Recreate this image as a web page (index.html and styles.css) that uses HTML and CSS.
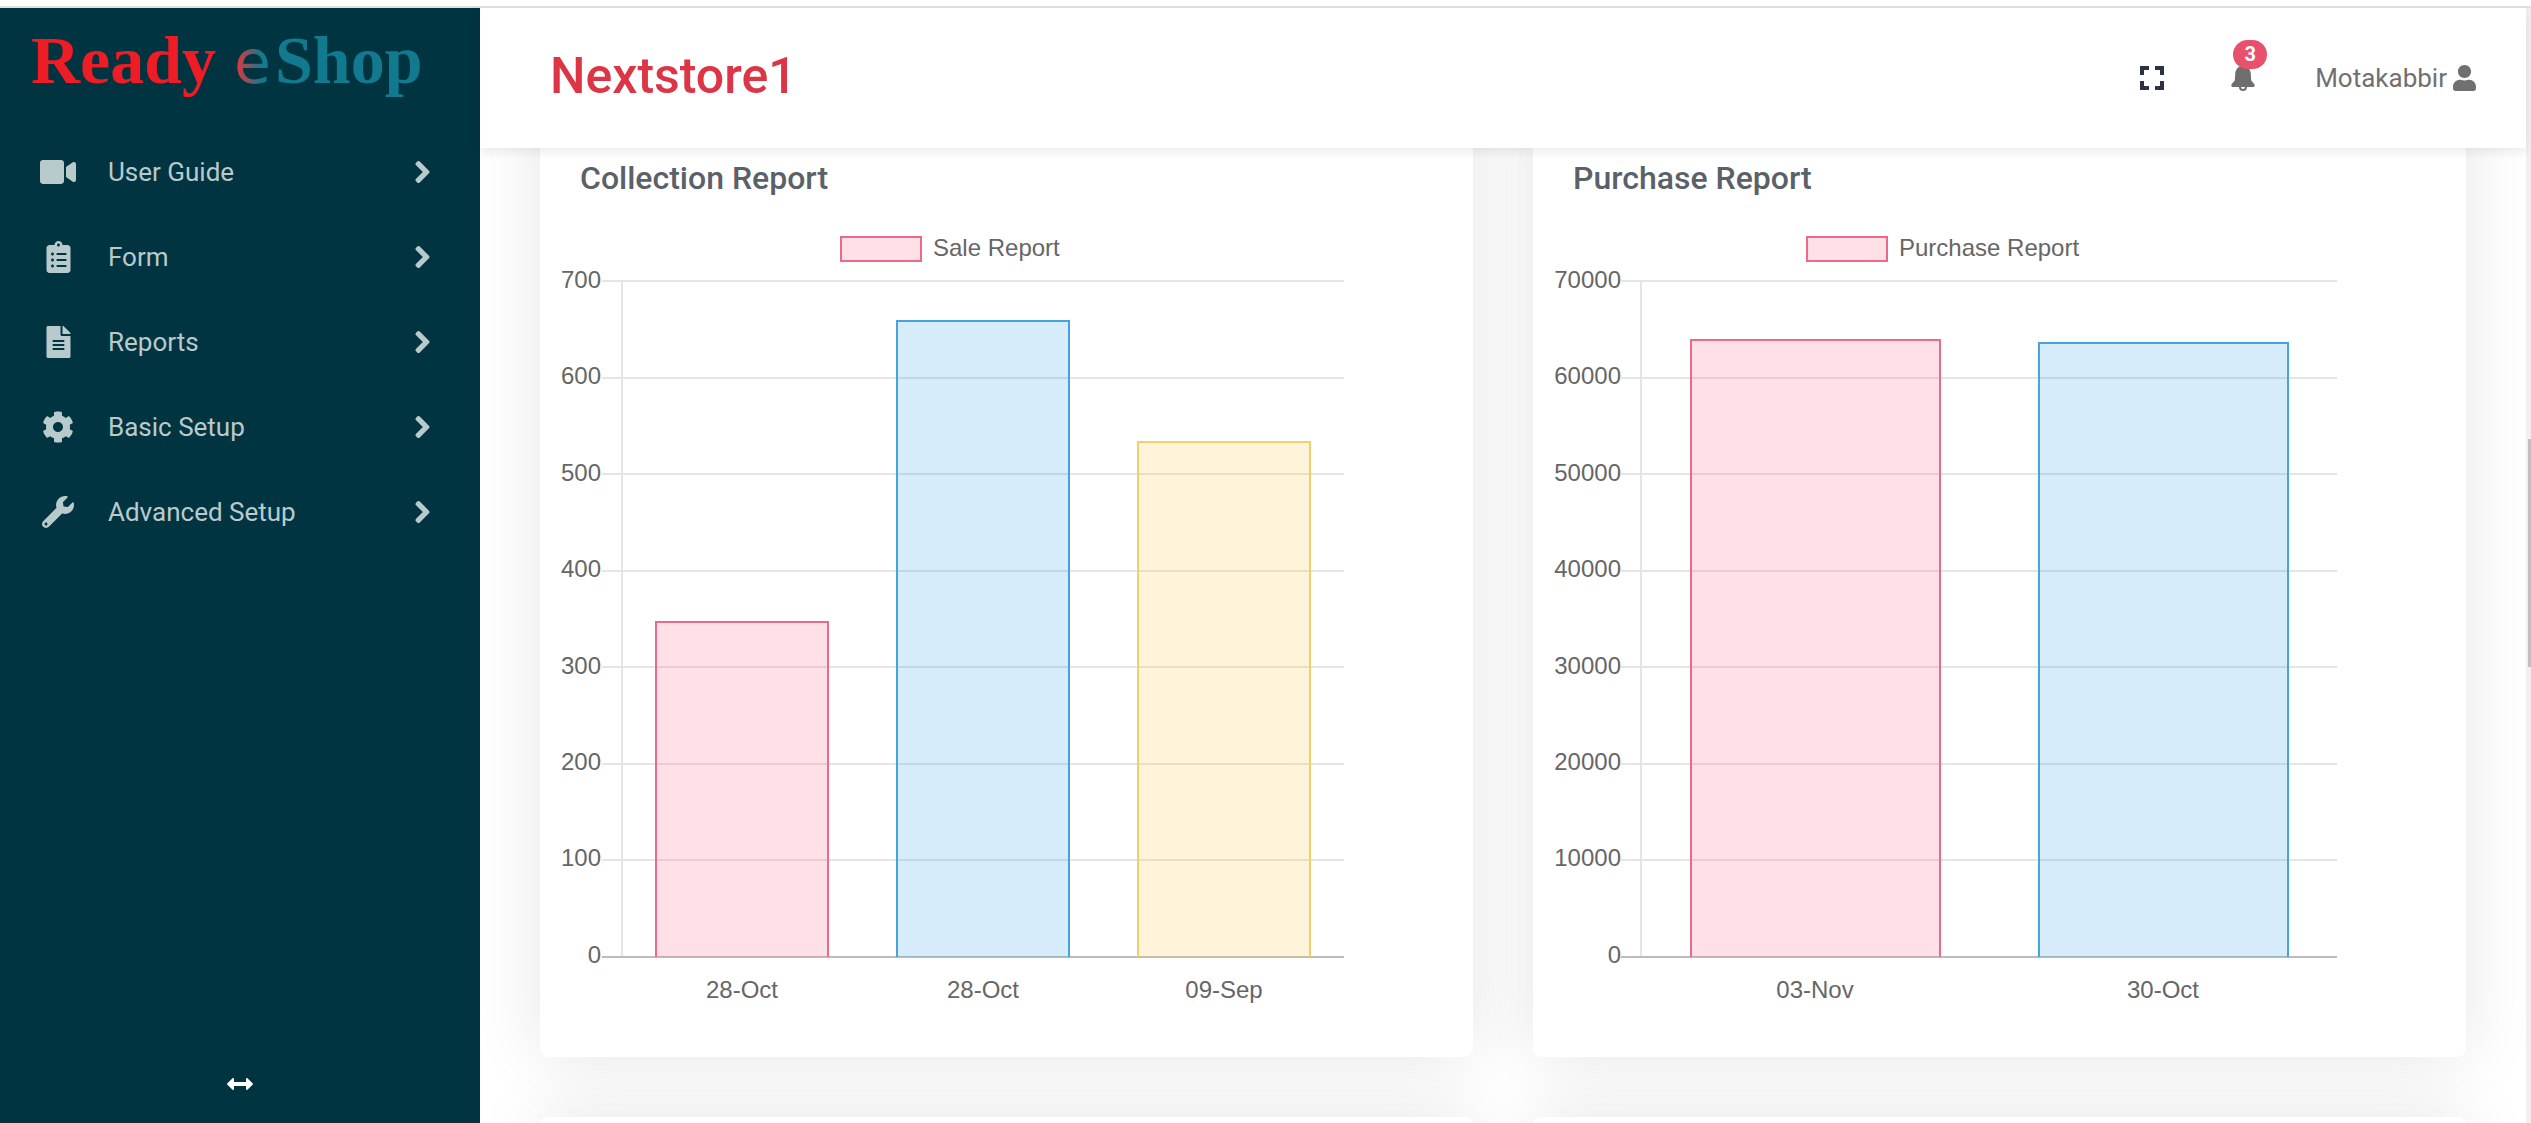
FILE: index.html
```html
<!DOCTYPE html>
<html lang="en">
<head>
<meta charset="utf-8">
<meta name="viewport" content="width=device-width, initial-scale=1">
<title>Nextstore1 - Ready eShop</title>
<link rel="stylesheet" href="styles.css">
</head>
<body>
<svg class="sprite" aria-hidden="true">
  <symbol id="chevron" viewBox="0 0 320 512"><path d="M285.476 272.971L91.132 467.314c-9.373 9.373-24.569 9.373-33.941 0l-22.667-22.667c-9.357-9.357-9.375-24.522-.04-33.901L188.505 256 34.484 101.255c-9.335-9.379-9.317-24.544.04-33.901l22.667-22.667c9.373-9.373 24.569-9.373 33.941 0L285.475 239.03c9.373 9.372 9.373 24.568.001 33.941z"/></symbol>
</svg>
<div class="app">
  <aside class="sidebar">
    <a class="logo" href="#"><span class="logo-ready">Ready</span><span class="logo-e">e</span><span class="logo-shop">Shop</span></a>
    <nav class="menu">
      <a class="menu-item" href="#">
        <span class="menu-icon"><svg width="38" height="32" viewBox="0 0 576 512"><path d="M336.200 64H47.800C21.400 64 0 85.400 0 111.800v288.400C0 426.600 21.400 448 47.800 448h288.400c26.400 0 47.800-21.400 47.800-47.800V111.800c0-26.400-21.400-47.800-47.800-47.800zm189.400 37.700L416 177.300v157.400l109.600 75.500c21.200 14.600 50.400-.3 50.400-25.800V127.500c0-25.400-29.100-40.400-50.400-25.800z"/></svg></span>
        <span class="menu-label">User Guide</span>
        <svg class="chevron" width="15" height="24"><use href="#chevron"/></svg>
      </a>
      <a class="menu-item" href="#">
        <span class="menu-icon"><svg width="25" height="32" viewBox="0 0 384 512"><path d="M336 64h-80c0-35.300-28.700-64-64-64s-64 28.700-64 64H48C21.500 64 0 85.500 0 112v352c0 26.500 21.500 48 48 48h288c26.500 0 48-21.500 48-48V112c0-26.500-21.500-48-48-48zM96 424c-13.300 0-24-10.700-24-24s10.700-24 24-24 24 10.700 24 24-10.700 24-24 24zm0-96c-13.300 0-24-10.700-24-24s10.700-24 24-24 24 10.700 24 24-10.700 24-24 24zm0-96c-13.300 0-24-10.700-24-24s10.700-24 24-24 24 10.700 24 24-10.700 24-24 24zm96-192c13.300 0 24 10.700 24 24s-10.700 24-24 24-24-10.700-24-24 10.700-24 24-24zm128 368c0 4.400-3.600 8-8 8H168c-4.400 0-8-3.600-8-8v-16c0-4.400 3.600-8 8-8h144c4.400 0 8 3.600 8 8v16zm0-96c0 4.400-3.600 8-8 8H168c-4.400 0-8-3.600-8-8v-16c0-4.400 3.600-8 8-8h144c4.400 0 8 3.600 8 8v16zm0-96c0 4.400-3.600 8-8 8H168c-4.400 0-8-3.600-8-8v-16c0-4.400 3.600-8 8-8h144c4.400 0 8 3.600 8 8v16z"/></svg></span>
        <span class="menu-label">Form</span>
        <svg class="chevron" width="15" height="24"><use href="#chevron"/></svg>
      </a>
      <a class="menu-item" href="#">
        <span class="menu-icon"><svg width="25" height="32" viewBox="0 0 384 512"><path d="M224 136V0H24C10.700 0 0 10.700 0 24v464c0 13.300 10.700 24 24 24h336c13.300 0 24-10.700 24-24V160H248c-13.200 0-24-10.800-24-24zm64 236c0 6.600-5.400 12-12 12H108c-6.600 0-12-5.400-12-12v-8c0-6.600 5.400-12 12-12h168c6.600 0 12 5.400 12 12v8zm0-64c0 6.600-5.400 12-12 12H108c-6.600 0-12-5.400-12-12v-8c0-6.600 5.400-12 12-12h168c6.600 0 12 5.400 12 12v8zm0-72v8c0 6.600-5.400 12-12 12H108c-6.600 0-12-5.400-12-12v-8c0-6.600 5.400-12 12-12h168c6.600 0 12 5.400 12 12zm96-114.100v6.100H256V0h6.100c6.400 0 12.500 2.500 17 7l97.900 98c4.500 4.500 7 10.600 7 16.900z"/></svg></span>
        <span class="menu-label">Reports</span>
        <svg class="chevron" width="15" height="24"><use href="#chevron"/></svg>
      </a>
      <a class="menu-item" href="#">
        <span class="menu-icon"><svg width="32" height="32" viewBox="0 0 512 512"><path d="M487.400 315.700l-42.600-24.600c4.300-23.200 4.300-47 0-70.200l42.600-24.600c4.900-2.800 7.100-8.600 5.500-14-11.100-35.600-30-67.800-54.700-94.600-3.800-4.100-10-5.100-14.800-2.300L380.800 110c-17.900-15.400-38.500-27.300-60.800-35.100V25.800c0-5.600-3.900-10.500-9.400-11.700-36.700-8.200-74.300-7.800-109.200 0-5.500 1.200-9.400 6.100-9.400 11.700V75c-22.200 7.900-42.800 19.800-60.800 35.100L88.700 85.500c-4.900-2.800-11-1.900-14.800 2.300-24.700 26.700-43.600 58.900-54.700 94.600-1.700 5.400.6 11.200 5.500 14L67.300 221c-4.300 23.200-4.300 47 0 70.200l-42.600 24.600c-4.900 2.800-7.100 8.600-5.500 14 11.100 35.600 30 67.800 54.700 94.600 3.800 4.100 10 5.100 14.800 2.300l42.600-24.600c17.900 15.400 38.500 27.300 60.800 35.100v49.200c0 5.600 3.900 10.500 9.400 11.700 36.700 8.200 74.300 7.800 109.200 0 5.500-1.200 9.400-6.100 9.400-11.700v-49.200c22.200-7.900 42.800-19.800 60.800-35.100l42.600 24.600c4.900 2.800 11 1.900 14.800-2.300 24.700-26.700 43.600-58.900 54.700-94.600 1.500-5.500-.7-11.300-5.600-14.100zM256 336c-44.100 0-80-35.900-80-80s35.900-80 80-80 80 35.900 80 80-35.900 80-80 80z"/></svg></span>
        <span class="menu-label">Basic Setup</span>
        <svg class="chevron" width="15" height="24"><use href="#chevron"/></svg>
      </a>
      <a class="menu-item" href="#">
        <span class="menu-icon"><svg width="32" height="32" viewBox="0 0 512 512"><path d="M507.730 109.100c-2.240-9.030-13.540-12.090-20.120-5.510l-74.360 74.360-67.880-11.310-11.310-67.880 74.360-74.360c6.620-6.620 3.430-17.900-5.660-20.160-47.380-11.740-99.550.91-136.580 37.930-39.640 39.640-50.550 97.100-34.050 147.200L18.740 402.760c-24.990 24.990-24.990 65.510 0 90.500 24.990 24.990 65.510 24.990 90.500 0l213.210-213.210c50.120 16.710 107.470 5.680 147.370-34.220 37.070-37.070 49.700-89.320 37.910-136.730zM64 472c-13.250 0-24-10.750-24-24 0-13.260 10.750-24 24-24s24 10.740 24 24c0 13.250-10.750 24-24 24z"/></svg></span>
        <span class="menu-label">Advanced Setup</span>
        <svg class="chevron" width="15" height="24"><use href="#chevron"/></svg>
      </a>
    </nav>
    <button class="collapse" type="button" aria-label="Resize menu"><svg width="26" height="12" viewBox="0 0 26 12"><path d="M7 1v3h12V1c0-1 1-1.300 1.700-.6l4.900 4.900c.4.400.4 1 0 1.400l-4.900 4.900c-.7.700-1.700.4-1.700-.6V8H7v3c0 1-1 1.300-1.700.6L.4 6.700c-.4-.4-.4-1 0-1.400L5.300.4C6-.3 7 0 7 1z"/></svg></button>
  </aside>

  <div class="page">
    <header class="topbar">
      <h1 class="store">Nextstore1</h1>
      <div class="tools">
        <button class="tool fullscreen" type="button" aria-label="Full screen"><svg width="24" height="24" viewBox="0 0 24 24"><path d="M0 0h9v4H4v5H0zM15 0h9v9h-4V4h-5zM0 15h4v5h5v4H0zM20 15h4v9h-9v-4h5z"/></svg></button>
        <button class="tool bell" type="button" aria-label="Notifications"><svg width="24" height="26" viewBox="0 0 24 26"><path d="M12 1C7 1 4.500 4.500 4.200 9L3.800 15.500 1.200 18.500C-.5 20.500.5 22 2 22H22c1.500 0 2.500-1.500.8-3.500L20.200 15.500 19.800 9C19.500 4.500 17 1 12 1z"/><path class="clapper" d="M9 22a3 3 0 0 0 6 0"/></svg><span class="badge">3</span></button>
        <a class="user" href="#">Motakabbir<svg width="23" height="26" viewBox="0 0 448 512" preserveAspectRatio="none"><path d="M224 256c70.700 0 128-57.300 128-128S294.700 0 224 0 96 57.300 96 128s57.300 128 128 128zm89.600 32h-16.700c-22.200 10.200-46.900 16-72.900 16s-50.600-5.800-72.900-16h-16.700C60.200 288 0 348.200 0 422.400V464c0 26.500 21.500 48 48 48h352c26.500 0 48-21.500 48-48v-41.600c0-74.200-60.200-134.400-134.400-134.400z"/></svg></a>
      </div>
    </header>

    <main class="content">
      <section class="card">
        <h2 class="card-title">Collection Report</h2>
        <svg class="chart" viewBox="0 0 788 790" role="img" aria-label="Sale Report">
          <rect class="pink" x="285" y="17" width="80" height="24"/>
          <text x="377" y="36">Sale Report</text>
          <path class="grid" d="M46 61H788M46 158H788M46 254H788M46 351H788M46 447H788M46 544H788M46 640H788M66 60V738"/>
          <path class="base" d="M46 737H788"/>
          <g class="ticks">
            <text x="45" y="68">700</text><text x="45" y="164">600</text><text x="45" y="261">500</text><text x="45" y="357">400</text>
            <text x="45" y="454">300</text><text x="45" y="550">200</text><text x="45" y="646">100</text><text x="45" y="743">0</text>
          </g>
          <path class="pink" d="M100 737V402H272V737"/>
          <path class="blue" d="M341 737V101H513V737"/>
          <path class="yellow" d="M582 737V222H754V737"/>
          <g class="dates"><text x="186" y="778">28-Oct</text><text x="427" y="778">28-Oct</text><text x="668" y="778">09-Sep</text></g>
        </svg>
      </section>
      <section class="card">
        <h2 class="card-title">Purchase Report</h2>
        <svg class="chart" viewBox="0 0 788 790" role="img" aria-label="Purchase Report">
          <rect class="pink" x="258" y="17" width="80" height="24"/>
          <text x="350" y="36">Purchase Report</text>
          <path class="grid" d="M72 61H788M72 158H788M72 254H788M72 351H788M72 447H788M72 544H788M72 640H788M92 60V738"/>
          <path class="base" d="M72 737H788"/>
          <g class="ticks">
            <text x="72" y="68">70000</text><text x="72" y="164">60000</text><text x="72" y="261">50000</text><text x="72" y="357">40000</text>
            <text x="72" y="454">30000</text><text x="72" y="550">20000</text><text x="72" y="646">10000</text><text x="72" y="743">0</text>
          </g>
          <path class="pink" d="M142 737V120H391V737"/>
          <path class="blue" d="M490 737V123H739V737"/>
          <g class="dates"><text x="266" y="778">03-Nov</text><text x="614" y="778">30-Oct</text></g>
        </svg>
      </section>
      <section class="card"></section>
      <section class="card"></section>
    </main>
  </div>
  <div class="scrollbar"><div class="thumb"></div></div>
</div>
</body>
</html>
```
FILE: styles.css
```css
* { box-sizing: border-box; }

body {
  margin: 0;
  background: #fff;
  font-family: Roboto, "Liberation Sans", sans-serif;
  font-size: 26px;
  line-height: 32px;
}

button {
  border: 0;
  padding: 0;
  background: none;
  font: inherit;
  cursor: pointer;
}

a { text-decoration: none; }
svg { display: block; fill: currentColor; }
.sprite { position: absolute; width: 0; height: 0; }

.app {
  display: flex;
  height: 100vh;
  padding-top: 6px;
  overflow: hidden;
}

/* Sidebar */
.sidebar {
  display: flex;
  flex-direction: column;
  flex: 0 0 480px;
  border-top: 2px solid #dcdfdf;
  background: #003441;
  color: #b9cacd;
}

.logo {
  display: flex;
  align-items: baseline;
  height: 121px;
  padding: 16px 0 0 31px;
  font: bold 68px/72px "Liberation Serif", serif;
}

.logo-ready { color: #ee1c25; }
.logo-shop { margin-left: 4px; color: #117a8e; }

.logo-e {
  margin-left: 18px;
  font: 60px/72px "DejaVu Sans", sans-serif;
  background: linear-gradient(90deg, #d8383f 10%, #117a8e 75%);
  background-clip: text;
  -webkit-background-clip: text;
  color: transparent;
}

.menu { flex: 1; }

.menu-item {
  display: flex;
  align-items: center;
  height: 85px;
  padding: 0 50px 0 36px;
  color: inherit;
}

.menu-icon {
  display: flex;
  justify-content: center;
  width: 44px;
}

.menu-label { flex: 1; margin-left: 28px; }
.chevron { stroke: currentColor; stroke-width: 32; }

.collapse {
  display: flex;
  justify-content: center;
  padding-bottom: 33px;
  color: #fff;
}

/* Main column */
.page {
  display: flex;
  flex-direction: column;
  flex: 1;
  min-width: 0;
  border-top: 2px solid #e0e0e0;
}

.topbar {
  position: relative;
  z-index: 1;
  display: flex;
  flex: none;
  align-items: center;
  justify-content: space-between;
  height: 140px;
  padding: 0 50px 0 70px;
  background: #fff;
  box-shadow: 0 4px 10px rgba(0, 0, 0, .08);
}

.store {
  margin: 0;
  padding-bottom: 4px;
  color: #dc3545;
  font-size: 50px;
  font-weight: 500;
  line-height: 60px;
}

.tools { display: flex; align-items: center; color: #707070; }
.tool { position: relative; }
.fullscreen { margin-right: 67px; color: #2b3244; }
.bell { margin-right: 60px; color: #6e6e6e; }
.clapper { fill: none; stroke: currentColor; stroke-width: 2; }

.badge {
  position: absolute;
  top: -25px;
  left: 2px;
  width: 34px;
  border-radius: 15px;
  background: #e9506b;
  color: #fff;
  font-size: 20px;
  font-weight: 700;
  line-height: 29px;
  text-align: center;
}

.user { display: flex; align-items: center; gap: 6px; color: inherit; }

/* The card grid is scrolled partly under the top bar */
.content {
  display: grid;
  flex: 1;
  grid-template-columns: 1fr 1fr;
  grid-template-rows: auto 400px;
  gap: 60px;
  min-height: 0;
  margin-top: -60px;
  padding: 0 60px;
  overflow: hidden;
}

.card {
  padding: 70px 16px 47px;
  border-radius: 8px;
  background: #fff;
  box-shadow: 0 0 70px rgba(0, 0, 0, .1);
}

.card-title {
  margin: 0 0 22px 24px;
  color: #5a6169;
  font-size: 32px;
  font-weight: 500;
  line-height: 40px;
}

/* Charts */
.chart {
  width: 100%;
  max-width: 788px;
  fill: #666;
  font-family: "Liberation Sans", Arial, sans-serif;
  font-size: 24px;
}

.ticks { text-anchor: end; }
.dates { text-anchor: middle; }
.grid { fill: none; stroke: #e5e5e5; stroke-width: 2; }
.base { fill: none; stroke: #bcbcbc; stroke-width: 2; }
.pink { fill: rgba(255, 99, 132, .2); stroke: #ec6a88; stroke-width: 2; }
.blue { fill: rgba(54, 162, 235, .2); stroke: #46a3dc; stroke-width: 2; }
.yellow { fill: rgba(255, 206, 86, .22); stroke: #f3cf6c; stroke-width: 2; }

/* Scroll track */
.scrollbar {
  flex: 0 0 5px;
  padding: 431px 0 0 2px;
  border-top: 2px solid #e0e0e0;
  background: #f0f0f0;
}

.thumb { height: 228px; background: #c0c0c0; }
```
